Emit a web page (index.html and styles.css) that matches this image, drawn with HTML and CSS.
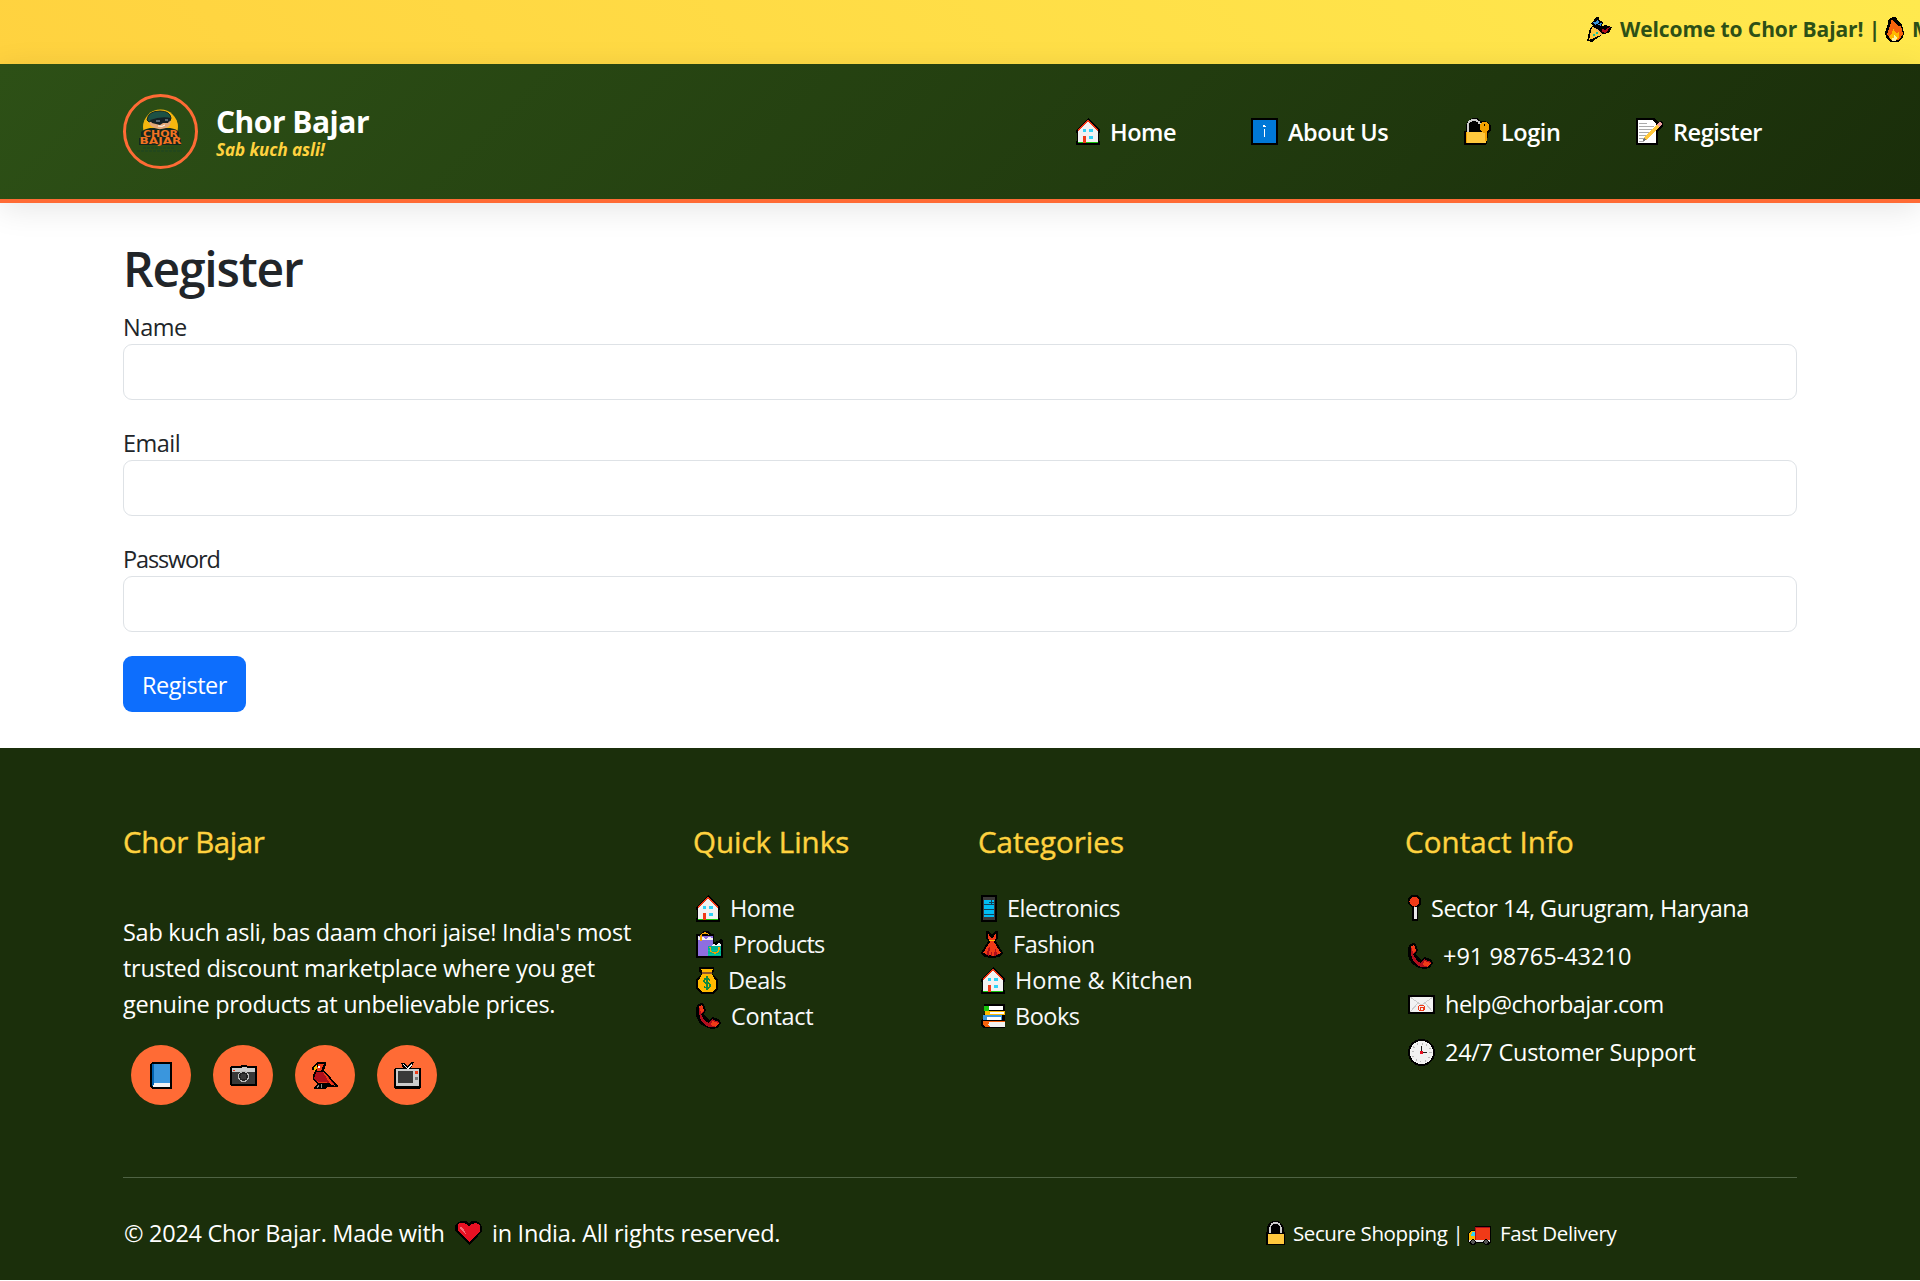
FILE: index.html
```html
<!DOCTYPE html>
<html lang="en">
<head>
<meta charset="utf-8">
<title>Chor Bajar - Register</title>
<link rel="stylesheet" href="styles.css">
</head>
<body>
<svg class="sprite" aria-hidden="true">
  <symbol id="home" viewBox="0 0 24 27"><path d="M12 0 24 12v3h-1v8h1v4H0v-4h1v-8H0v-3Z" fill="#000"/><path d="M12 4 22 13v11H2V13Z" fill="#f2f2f2"/><path d="m2 12.500 10-10 10 10" fill="none" stroke="#f03a17" stroke-width="1.600"/><path d="M7 11h3v3H7zM13 11h4v3h-4zM13 18h4v3h-4z" fill="#31d2f7"/><path d="M7 18h3v7H7z" fill="#f03a17"/><path d="M2 24h5v1H2zM10 24h12v1H10z" fill="#16c60c"/></symbol>
  <symbol id="info" viewBox="0 0 27 27"><path d="M0 0h27v27H0z"/><path d="M2 2h23v23H2z" fill="#0078d7"/><path d="M12 7h2v1h1v1h-3zM13 11h1.300v8H13z" fill="#fff"/></symbol>
  <symbol id="login" viewBox="0 0 27 27"><path d="M0 13h2V7l3-5 4-2h4l4 3 3 0 4 1 3 4v4l-3 3-1 10-2 2H0Z"/><path d="M4 14V8q0-6 6-6 4 0 6 4" fill="none" stroke="#ccc" stroke-width="2"/><path d="M2 14h20v11H2z" fill="#ffc83d"/><path d="M2 14h1v11H2zM21 14h2v9h-2z" fill="#f2a100"/><circle cx="20.500" cy="9" r="5" fill="#f2a100"/><path d="M18.500 12h3v3h-3z" fill="#f2a100"/><circle cx="20.500" cy="7" r="1"/></symbol>
  <symbol id="memo" viewBox="0 0 27 27"><path d="M0 0h18l4 4 3-1 2 2v3l-5 6v13H0Z"/><path d="M2 2h15l3 4v19H2z" fill="#fff"/><path d="M3 5h8M3 8h15M3 11h14M3 14h12M3 17h10M3 20h6M3 23h5" stroke="#aaa"/><path d="M9 21 23 7" stroke="#ffc83d" stroke-width="3"/><path d="m22 8 3-3" stroke="#eea0a0" stroke-width="3"/><path d="m7 23 1-3 2 2z" fill="#777"/></symbol>
  <symbol id="bags" viewBox="0 0 27 27"><path d="M0 3h4l3-3h5l3 3h3v8l4-1 3-2 2 1v18H0Z"/><path d="M2 5h15v20H2z" fill="#8e6ee0"/><path d="M2 5l2 2 3-1 3 2 3-2 4 1v2H2zM17 13l3 1 2-2 3 1v3h-9z" fill="#f2f2f2"/><path d="M12 15h13v10H12z" fill="#00b294"/><path d="M12 19h13M12 23h13" stroke="#00cc9a"/><path d="M5 10V4q1-2 4-2t4 2M14 16q0 6 5 6t4-6" fill="none" stroke="#f2a100" stroke-width="1.300"/></symbol>
  <symbol id="money" viewBox="0 0 22 27"><path d="M3 0h15v4l-2 3 6 6v9l-5 5H5l-5-5v-9l5-6-2-3Z"/><path d="M5 2h12l-2 4 5 8v7l-4 4H6l-4-4v-7l5-8Z" fill="#ffb900"/><path d="M6 5h10v2H6z" fill="#8e562e"/><path d="M14 13q-6-3-6 1 0 2 3 2t3 3q0 3-6 1M11 9v14" fill="none" stroke="#10893e" stroke-width="1.700"/></symbol>
  <symbol id="phone" viewBox="0 0 25 26"><path d="M2 1 5 0l3 1 2 6-2 4 5 6 3-3 7 2 2 4-3 5-6 1Q-2 23 0 5Z"/><path d="m3 3 3-1 2 6-3 3q3 7 8 9l3-4 7 3-2 4q-9 3-14-3T3 3Z" fill="#b10e1c"/><path d="m3 3 3-1 2 5-3 3zM16 18l7 2-3 4-5-2z" fill="#f03a17"/></symbol>
  <symbol id="mobile" viewBox="0 0 16 27"><rect width="16" height="27" rx="1.500"/><path d="M2 2h12v23H2z" fill="#393939"/><path d="M3 5h10v17H3z" fill="#00bcf2"/><path d="M3 9.500h10M3 14.500h10M3 19.500h10M10.500 5v4M8 7.500h5" stroke="#10435a"/></symbol>
  <symbol id="dress" viewBox="0 0 22 27"><path d="M5 0h3l3 4 3-4h3v7l-2 3 7 12-3 4-8 1-8-1-3-4 7-12-2-3Z"/><path d="M7 2l3 5h2l3-5v5l-2 4 7 11-9 3-9-3L9 11 7 7Z" fill="#f03a17"/><path d="m8 16-3 8 3 1 1-9zM14 17l3 7-4 1zM11 18v7h-1z" fill="#b10e1c"/><path d="M8 9h6" stroke="#ffb900"/></symbol>
  <symbol id="books" viewBox="0 0 24 24"><path d="M3 0h21v17l0 7H2l-2-3v-5l2-1v-4l2-2Z"/><path d="M3 2h5v5H3z" fill="#16c60c"/><path d="M8 2h14v4H8z" fill="#fff"/><path d="M4 7h20v4H4z" fill="#ffb900"/><path d="M9 8h14v2H9z" fill="#fff"/><path d="M2 11h19v5H2z" fill="#3a96dd"/><path d="M6 12.500h14v3H6z" fill="#fff"/><path d="M2 17h22v6H4l-2-2z" fill="#f7630c"/><path d="M9 17.500h15v5H9l-2-2z" fill="#f2f2f2"/></symbol>
  <symbol id="pin" viewBox="0 0 13 27"><path d="m3 0h7l3 4v5l-3 4v13H4V13L0 9V4Z"/><circle cx="6.500" cy="6.500" r="5" fill="#f03a17"/><path d="M6 12h2.500v12H6z" fill="#e6e6e6"/></symbol>
  <symbol id="mail" viewBox="0 0 27 19"><path d="M0 0h27v19H0z"/><path d="M2 2h23v15H2z" fill="#f2f2f2"/><path d="m2 2 11.500 8L25 2M2 17l8-9M25 17l-8-9" fill="none" stroke="#ccc"/><circle cx="13.500" cy="13" r="3" fill="#f2f2f2" stroke="#f03a17"/><path d="M12 12h3v3h-3z" fill="none" stroke="#f03a17"/></symbol>
  <symbol id="clock" viewBox="0 0 27 27"><circle cx="13.500" cy="13.500" r="13.500"/><circle cx="13.500" cy="13.500" r="11.500" fill="#f2f2f2"/><circle cx="13.500" cy="13.500" r="9" fill="none" stroke="#bbb" stroke-width="2" stroke-dasharray="1 3.710"/><path d="M13.500 6.500v7H19" fill="none" stroke="#222"/><path d="M12 12h3v3h-3z" fill="#e81123"/></symbol>
  <symbol id="book" viewBox="0 0 22 27"><path d="M2 0h20v27H2l-2-2V2Z"/><path d="M4 2h16v19H4z" fill="#3a96dd"/><path d="M2 2h2v22H2z" fill="#0063b1"/><path d="M4 21h16v4H3z" fill="#f2f2f2"/></symbol>
  <symbol id="camera" viewBox="0 0 27 21"><path d="M1 1h9l1-1h5l1 1h9l1 1v18l-1 1H1l-1-1V2Z"/><path d="M2 3h23v16H2z" fill="#393939"/><path d="M2 3h9l1-1h4l1 1h8v4H2z" fill="#ccc"/><path d="M3 5h2v1H3z" fill="#f03a17"/><circle cx="13.500" cy="11.500" r="5" fill="#222" stroke="#bbb"/><circle cx="13.500" cy="11.500" r="3" fill="#393939"/></symbol>
  <symbol id="bird" viewBox="0 0 27 27"><path d="M5 0h9v3l-2 5 14 16v1H15l-2 3H2v-3l3-3-4-4v-5l2-4-3-1V5Z"/><path d="m6 2h6l-3 7H5Z" fill="#f03a17"/><path d="M2 5l3-2v4L2 9z" fill="#ffb900"/><path d="M6 4h2v2H6z" fill="#fff"/><path d="m4 10h8l10 12-8-1-7-1-5-3Z" fill="#b10e1c"/><path d="m12 10 11 14-5-2-7-12zM3 18l4 2h7l1 1H6z" fill="#f03a17"/><path d="m7 23-2 3m5-4-1 4" stroke="#888"/></symbol>
  <symbol id="tv" viewBox="0 0 27 27"><path d="M7 1h3l4 3 3-4h3l-3 6h9l1 1v18l-2 2H1l-1-1V7l1-1h8Z"/><path d="M2 7h23v17H2z" fill="#ccc"/><path d="M4 9h15v12H4z" fill="#393939"/><path d="M21 9h3v3h-3z" fill="#f03a17"/><path d="M21 15h3v3h-3z" fill="#777"/><path d="m9 2 5 5 4-5" fill="none" stroke="#f2f2f2" stroke-width="1.300"/></symbol>
  <symbol id="heart" viewBox="0 0 27 24"><path d="M3 1 7 0h4l3 2 3-2h4l4 2 2 4v4l-4 5-9 9-9-9-5-6V4Z"/><path d="M3 3q5-3 11 2 6-5 11-1v6L14 21 3 10Z" fill="#e81123"/><path d="m6 5-1 3 7 7-3-6z" fill="#f1707b"/></symbol>
  <symbol id="lock" viewBox="0 0 19 24"><path d="M0 11h1V6l3-5 3-1h5l4 3 2 4v4h1v13H0Z"/><path d="M4 12V7q1-5 5.500-5T15 7v5" fill="none" stroke="#ccc" stroke-width="1.700"/><path d="M1.500 12.500h16v10h-16z" fill="#ffc83d"/></symbol>
  <symbol id="truck" viewBox="0 0 23 19"><path d="M7 0h16v16l-3 3h-3l-2-2H8l-2 2H3l-3-3V7l3-3h4Z"/><path d="M8 1h14v13H8z" fill="#f03a17"/><path d="M8 1h14v1H8z" fill="#b10e1c"/><path d="M7 1h1v13H7z" fill="#b10e1c"/><path d="M3 5h4v9H1V8z" fill="#ffb900"/><path d="M4 6h3v4H3z" fill="#31d2f7"/><path d="M1 14h21v2H1z" fill="#e6e6e6"/><circle cx="5" cy="16" r="2.200" fill="#555" stroke="#000"/><circle cx="18" cy="16" r="2.200" fill="#555" stroke="#000"/></symbol>
  <symbol id="party" viewBox="0 0 25 25"><path d="m6 9-2-3 3-3 2-3h3v3l4 2-1 4 3-1 7 2-3 6-6 1-11 8-5-1 3-13Z"/><path d="m5 10 4 1 5 7L2 23Z" fill="#ffc83d"/><path d="m7 11 4 1 4 5-1 1z" fill="#f2b060"/><path d="M6 5h3l2-3 1 4-4 2zM10 7l5-1-1 3z" fill="#3a96dd"/><path d="m15 12 3 1 5-3-4 6-4-1z" fill="#b10e1c"/><path d="M6 17h2v2H6zM9 15h2v2H9z" fill="#10c4a0"/></symbol>
  <symbol id="fire" viewBox="0 0 19 25"><path d="m7 0 4 0 3 5 2 1 2 5 1 6-2 5-4 3H6l-4-3-2-6 2-6 1-3V3l2-2h2Z"/><path d="m7 2 6 7 3 0 2 8-4 6H6L2 17l3-8 1-4Z" fill="#f7630c"/><path d="m8 11 3 5 3-1 0 5-3 4H7l-3-5 3-2Z" fill="#ffb900"/><path d="m9 18 3 3-1 3H7l0-3 2 0z" fill="#fff2a0"/></symbol>
</svg>

<div class="ticker">
  <svg class="ic party"><use href="#party"/></svg>
  <span class="t-welcome">Welcome to Chor Bajar! |</span>
  <svg class="ic fire"><use href="#fire"/></svg>
  <span>M</span>
</div>

<header class="header">
  <a class="brand">
    <svg class="logo" viewBox="0 0 75 75">
      <circle cx="37.500" cy="37.500" r="36" fill="none" stroke="#ff6b35" stroke-width="3"/>
      <circle cx="37.500" cy="33" r="17.500" fill="#f5b70e"/>
      <path d="M18 38q3-3 9-4h20q7 1 9 4v6l2 1v6H16v-7h2Z" fill="#12271d"/>
      <path d="M26 24h21q2 8-4 10-9 3-15-2-3-3-2-8Z" fill="#e5a878"/>
      <path d="M24 26q1-9 13-9 10 0 11 7l-1 3q-12-4-21 1Z" fill="#1c5145" stroke="#102820"/>
      <path d="M27 26q11-4 21-2l-3 5-5 0-3 2-8-2Z" fill="#152024"/>
      <path d="M33 27h4M42 26h3" stroke="#9ab"/>
      <path d="M35 32q5 1 7-1" fill="none" stroke="#fff"/>
      <text class="logo-text" x="20" y="43" textLength="35" lengthAdjust="spacingAndGlyphs">CHOR</text>
      <text class="logo-text" x="16.500" y="50.300" textLength="42" lengthAdjust="spacingAndGlyphs">BAJAR</text>
      <path d="M20 54h32M14 57h45" stroke="#1d4425" stroke-dasharray="3 1"/>
    </svg>
    <span class="brand-text"><span class="brand-name">Chor Bajar</span><span class="brand-sub">Sab kuch asli!</span></span>
  </a>
  <nav class="nav">
    <a class="n-home"><svg class="ic home"><use href="#home"/></svg><span>Home</span></a>
    <a class="n-about"><svg class="ic sq"><use href="#info"/></svg><span>About Us</span></a>
    <a class="n-login"><svg class="ic sq"><use href="#login"/></svg><span>Login</span></a>
    <a class="n-register"><svg class="ic sq"><use href="#memo"/></svg><span>Register</span></a>
  </nav>
</header>

<main class="main">
  <h1>Register</h1>
  <form>
    <label for="name">Name</label><input id="name" type="text">
    <label for="email">Email</label><input id="email" type="email">
    <label for="password" class="l-password">Password</label><input id="password" type="password">
    <button type="button">Register</button>
  </form>
</main>

<footer class="footer">
  <div class="cols">
    <section>
      <h5 class="h-brand">Chor Bajar</h5>
      <p class="about">Sab kuch asli, bas daam chori jaise! India's most<br>trusted discount marketplace where you get<br>genuine products at unbelievable prices.</p>
      <div class="social">
        <a><svg class="ic book"><use href="#book"/></svg></a>
        <a><svg class="ic camera"><use href="#camera"/></svg></a>
        <a><svg class="ic bird"><use href="#bird"/></svg></a>
        <a><svg class="ic tv"><use href="#tv"/></svg></a>
      </div>
    </section>
    <section>
      <h5>Quick Links</h5>
      <ul>
        <li><svg class="ic home"><use href="#home"/></svg><span>Home</span></li>
        <li><svg class="ic sq"><use href="#bags"/></svg><span class="l-products">Products</span></li>
        <li><svg class="ic w22"><use href="#money"/></svg><span>Deals</span></li>
        <li><svg class="ic phone"><use href="#phone"/></svg><span class="l-contact">Contact</span></li>
      </ul>
    </section>
    <section>
      <h5>Categories</h5>
      <ul>
        <li><svg class="ic mobile"><use href="#mobile"/></svg><span>Electronics</span></li>
        <li><svg class="ic w22"><use href="#dress"/></svg><span>Fashion</span></li>
        <li><svg class="ic home"><use href="#home"/></svg><span class="l-kitchen">Home &amp; Kitchen</span></li>
        <li><svg class="ic books"><use href="#books"/></svg><span>Books</span></li>
      </ul>
    </section>
    <section>
      <h5 class="h-contact">Contact Info</h5>
      <ul class="contact">
        <li><svg class="ic pin"><use href="#pin"/></svg><span>Sector 14, Gurugram, Haryana</span></li>
        <li><svg class="ic phone"><use href="#phone"/></svg><span class="c-tel">+91 98765-43210</span></li>
        <li><svg class="ic mail"><use href="#mail"/></svg><span>help@chorbajar.com</span></li>
        <li><svg class="ic sq"><use href="#clock"/></svg><span class="c-time">24/7 Customer Support</span></li>
      </ul>
    </section>
  </div>
  <div class="legal">
    <p class="copy"><span class="copy-a">© 2024 Chor Bajar. Made with</span><svg class="ic heart"><use href="#heart"/></svg><span class="copy-b">in India. All rights reserved.</span></p>
    <p class="perks"><svg class="ic lock"><use href="#lock"/></svg><span class="perk-a">Secure Shopping |</span><svg class="ic truck"><use href="#truck"/></svg><span class="perk-b">Fast Delivery</span></p>
  </div>
</footer>
</body>
</html>
```

FILE: styles.css
```css
* { box-sizing: border-box; margin: 0; padding: 0; }
body { font-family: "Open Sans", "Noto Sans", sans-serif; font-size: 23.5px; line-height: 36px; letter-spacing: -0.5px; color: #212529; background: #fff; overflow: hidden; }
.sprite { display: none; }
.ic { flex: none; display: block; shape-rendering: crispEdges; }
.home { width: 24px; height: 27px; }
.sq, .bird, .tv { width: 27px; height: 27px; }
.w22, .book { width: 22px; height: 27px; }
.phone { width: 25px; height: 26px; }
.mobile { width: 16px; height: 27px; }
.books { width: 24px; height: 24px; }
.pin { width: 13px; height: 27px; }
.mail { width: 27px; height: 19px; }
.camera { width: 27px; height: 21px; }
.party { width: 25px; height: 25px; }
.fire { width: 19px; height: 25px; }

.ticker { height: 64px; padding: 13px 0 19px 1587px; display: flex; align-items: center; white-space: nowrap; overflow: hidden; font-size: 21px; font-weight: 700; line-height: 32px; letter-spacing: -0.1px; color: #2d5016; background: linear-gradient(45deg, #ffd23f, #ffe94e); }
.ticker span { flex: none; }
.ticker .t-welcome { width: 265px; margin-left: 8px; }
.ticker .fire { margin-right: 8px; }

.header { height: 139px; padding: 0 123px; display: flex; align-items: center; background: linear-gradient(135deg, #2d5016, #1a2e0a); border-bottom: 4px solid #ff6b35; box-shadow: 0 6px 30px rgba(0, 0, 0, .1); }
.brand { display: flex; align-items: center; gap: 18px; }
.logo { width: 75px; height: 75px; }
.logo-text { font: bold 9px "DejaVu Sans", sans-serif; letter-spacing: 0; fill: #f27321; }
.brand-text { display: flex; flex-direction: column; padding-top: 2px; }
.brand-name { font-size: 30px; line-height: 35px; font-weight: 700; color: #fff; }
.brand-sub { font-size: 17px; line-height: 22px; font-weight: 700; font-style: italic; letter-spacing: -0.05px; color: #ffd23f; }
.nav { flex: 1; margin-left: 30px; display: flex; justify-content: flex-end; font-weight: 600; letter-spacing: -0.45px; color: #fff; }
.nav a { display: flex; align-items: center; gap: 10px; }
.nav .n-home { width: 175px; }
.nav .n-about { width: 213px; }
.nav .n-login { width: 172px; }
.nav .n-register { width: 161px; }

.main { padding: 36px 123px; }
h1 { height: 57px; font-size: 48px; line-height: 60px; font-weight: 600; letter-spacing: -1.2px; margin-bottom: 12px; }
form { display: flex; flex-direction: column; align-items: stretch; }
label { height: 36px; line-height: 39px; }
.l-password { letter-spacing: -1.15px; }
input { height: 56px; margin-bottom: 24px; border: 1px solid #dee2e6; border-radius: 9px; background: #fff; }
button { align-self: flex-start; width: 123px; height: 56px; border: 0; border-radius: 9px; background: #0d6efd; color: #fff; font: inherit; letter-spacing: inherit; line-height: 58px; }

.footer { height: 532px; padding: 72px 123px 0; background: #1b2f0b; color: #fff; }
.cols { height: 357px; display: grid; grid-template-columns: 570px 285px 427px 1fr; }
h5 { font-size: 29.5px; line-height: 43px; font-weight: 500; letter-spacing: 0; color: #ffd23f; -webkit-text-stroke: .4px #ffd23f; margin-bottom: 27px; }
.h-brand { letter-spacing: -0.4px; }
.h-contact { letter-spacing: .1px; }
.about { padding-top: 24px; white-space: nowrap; letter-spacing: -0.28px; }
.social { display: flex; gap: 22px; padding: 23px 8px 0; }
.social a { width: 60px; height: 60px; border-radius: 50%; background: #ff6b35; display: flex; align-items: center; justify-content: center; }
ul { list-style: none; }
li { height: 36px; display: flex; align-items: center; gap: 10px; padding-left: 3px; white-space: nowrap; color: #f8f9fa; }
.l-products { letter-spacing: -0.75px; }
.l-contact { letter-spacing: -0.3px; }
.l-kitchen { letter-spacing: 0; }
.contact li { margin-bottom: 12px; color: #fff; }
.c-tel { letter-spacing: 0; }
.c-time { letter-spacing: -0.3px; }
.legal { display: flex; height: 103px; padding-top: 37px; border-top: 1px solid #4f6344; }
.legal p { display: flex; align-items: center; height: 36px; white-space: nowrap; }
.copy { width: 1143px; padding-left: 1px; letter-spacing: -0.28px; }
.copy-a { width: 331px; }
.copy-b { margin-left: 10px; }
.heart { width: 27px; height: 24px; }
.perks { font-size: 20.5px; letter-spacing: -0.4px; }
.perk-a { width: 175px; margin-left: 8px; }
.perk-b { margin-left: 9px; }
.lock { width: 19px; height: 24px; }
.truck { width: 23px; height: 19px; margin-top: 4px; }
```
